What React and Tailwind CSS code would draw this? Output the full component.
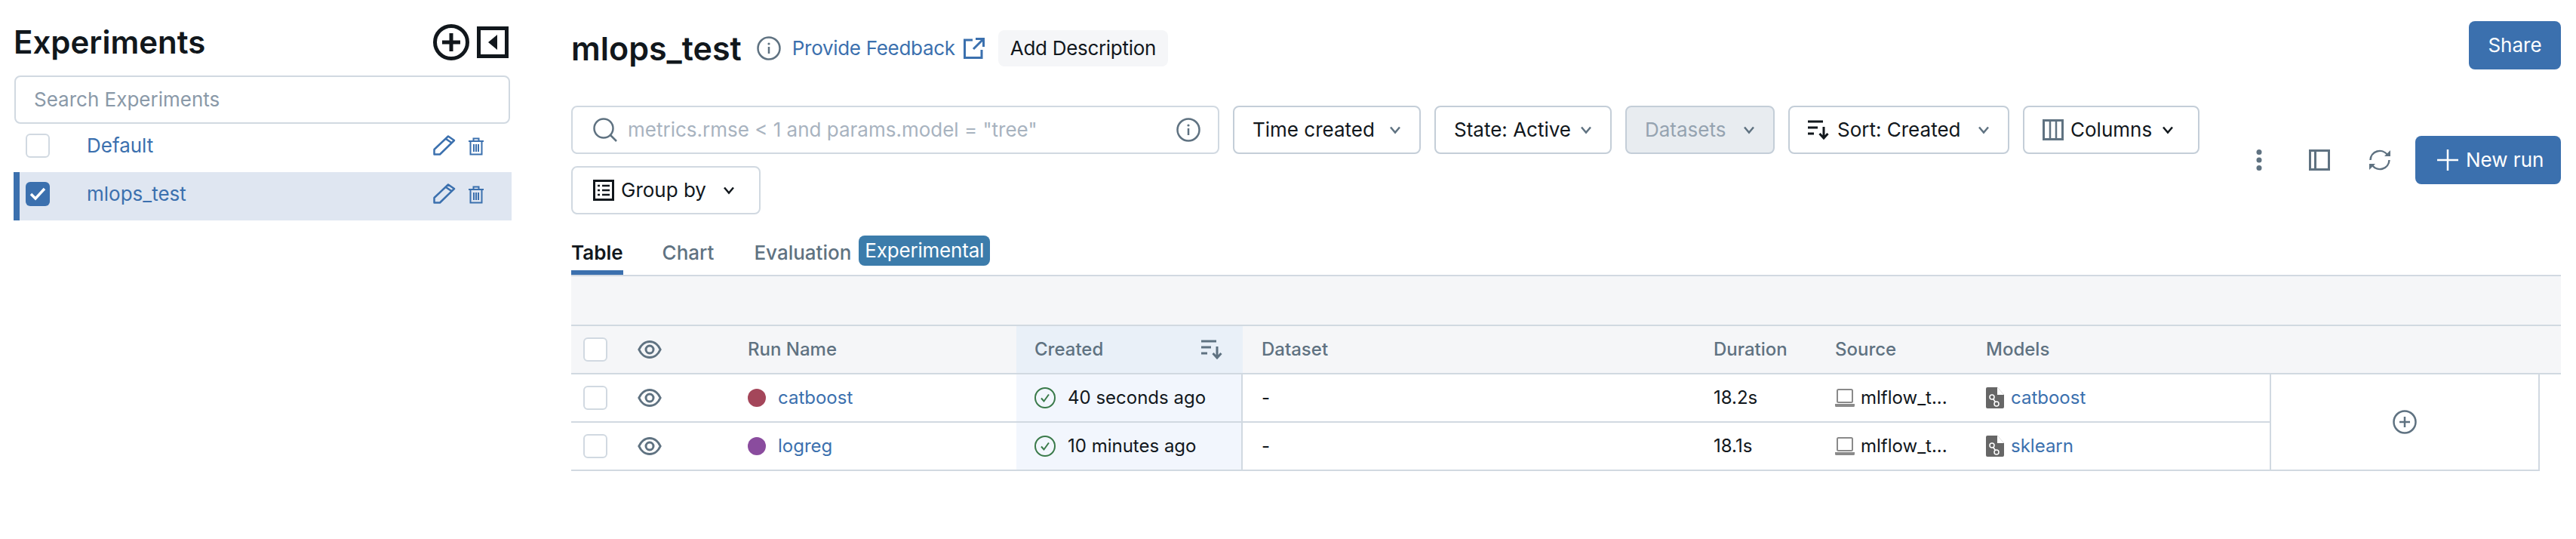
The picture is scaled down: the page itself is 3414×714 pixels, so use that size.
const FILTERS = [
  { label: "Time created", width: "w-[249px]" },
  { label: "State: Active", width: "w-[235px]" },
  { label: "Datasets", width: "w-[198px]", disabled: true },
  { label: "Sort: Created", width: "w-[293px]", icon: "sort" },
  { label: "Columns", width: "w-[234px]", icon: "columns" },
];

const RUNS = [
  { name: "catboost", color: "bg-[#a4465a]", created: "40 seconds ago", duration: "18.2s", model: "catboost" },
  { name: "logreg", color: "bg-[#8a4c9e]", created: "10 minutes ago", duration: "18.1s", model: "sklearn" },
];

function Chevron({ className = "" }) {
  return (
    <svg className={className} width="16" height="12" viewBox="0 0 16 12" fill="none" stroke="currentColor" strokeWidth="2.5">
      <path d="M2 2.5l6 7 6-7" />
    </svg>
  );
}

function InfoIcon({ size = 32 }) {
  return (
    <svg width={size} height={size} viewBox="0 0 32 32" fill="none" className="text-[#5f7281] shrink-0">
      <circle cx="16" cy="16" r="14.5" stroke="currentColor" strokeWidth="2.5" />
      <path d="M16 14v9" stroke="currentColor" strokeWidth="2.5" />
      <circle cx="16" cy="10" r="1.6" fill="currentColor" />
    </svg>
  );
}

function Pencil() {
  return (
    <svg width="30" height="28" viewBox="0 0 30 28" fill="none" stroke="currentColor" strokeWidth="2.5" strokeLinejoin="round">
      <path d="M1.5 26.5V20L20 2.5l8 5.5L9 26.5z" />
      <path d="M17 6l8 5.5" />
    </svg>
  );
}

function Trash() {
  return (
    <svg width="20" height="24" viewBox="0 0 20 24" fill="none" stroke="currentColor" strokeWidth="2">
      <path d="M0 5h20M6.5 5V1.5h7V5M2.5 5v17.5h15V5M7 9v10M10 9v10M13 9v10" />
    </svg>
  );
}

function Eye() {
  return (
    <svg width="32" height="24" viewBox="0 0 32 24" fill="none" stroke="#5f7281" strokeWidth="3" className="shrink-0">
      <path d="M16 1.5C9 1.5 4 7 1.8 12 4 17 9 22.5 16 22.5S28 17 30.2 12C28 7 23 1.5 16 1.5z" />
      <circle cx="16" cy="12" r="5" />
    </svg>
  );
}

function SortIcon({ color }) {
  return (
    <svg width="30" height="26" viewBox="0 0 30 26" fill="none" stroke={color} strokeWidth="3">
      <path d="M0 2h20M0 10h13M0 18h8M21 9v15M15.5 18l5.5 6 5.5-6" />
    </svg>
  );
}

function ColumnsIcon() {
  return (
    <svg width="28" height="28" viewBox="0 0 28 28" fill="none" stroke="#5f7281" strokeWidth="2.5">
      <rect x="1.5" y="1.5" width="25" height="25" strokeWidth="3" />
      <path d="M10 2v24M18 2v24" />
    </svg>
  );
}

function GroupIcon() {
  return (
    <svg width="28" height="28" viewBox="0 0 28 28" fill="none" stroke="#11171c" strokeWidth="2.5">
      <rect x="1.5" y="1.5" width="25" height="25" strokeWidth="3" />
      <path d="M6 8h3M12 8h10M6 14h3M12 14h10M6 20h3M12 20h10" />
    </svg>
  );
}

function CheckCircle() {
  return (
    <svg width="28" height="28" viewBox="0 0 28 28" fill="none" stroke="#3a7a4a" strokeWidth="2" className="shrink-0">
      <circle cx="14" cy="14" r="13" />
      <path d="M9 14.5l3.5 4 6.5-9" />
    </svg>
  );
}

function Laptop() {
  return (
    <svg width="26" height="26" viewBox="0 0 26 26" fill="none" className="shrink-0">
      <rect x="3" y="2" width="20" height="17" rx="1.5" stroke="#8a8a8a" strokeWidth="2" />
      <path d="M0 21h26v2.5a1.5 1.5 0 0 1-1.5 1.5h-23A1.5 1.5 0 0 1 0 23.5z" fill="#8a8a8a" />
    </svg>
  );
}

function ModelIcon() {
  return (
    <svg width="24" height="28" viewBox="0 0 24 28" className="shrink-0">
      <path d="M2 0h13l9 10v16a2 2 0 0 1-2 2H2a2 2 0 0 1-2-2V2a2 2 0 0 1 2-2z" fill="#666" />
      <path d="M15 0v10h9z" fill="#fff" />
      <path d="M8 13l6 9" stroke="#fff" strokeWidth="1.5" fill="none" />
      <circle cx="8" cy="13" r="3" fill="#666" stroke="#fff" strokeWidth="1.5" />
      <circle cx="14" cy="22" r="3" fill="#666" stroke="#fff" strokeWidth="1.5" />
    </svg>
  );
}

function Checkbox({ checked }) {
  return checked ? (
    <div className="w-[32px] h-[32px] rounded-[6px] bg-[#3b70ae] flex items-center justify-center shrink-0">
      <svg width="22" height="18" viewBox="0 0 22 18" fill="none" stroke="#fff" strokeWidth="3.5">
        <path d="M2 9l6 6L20 2" />
      </svg>
    </div>
  ) : (
    <div className="w-[32px] h-[32px] rounded-[6px] border-2 border-[#d1d9e1] bg-white shrink-0" />
  );
}

function ExperimentRow({ name, selected }) {
  return (
    <div className={`h-[64px] pb-[6px] flex items-center text-[#3b70ae] border-l-[8px] ${selected ? "bg-[#dfe6f1] border-[#3b70ae]" : "border-transparent"}`}>
      <div className="ml-[8px] w-[81px]">
        <Checkbox checked={selected} />
      </div>
      <span>{name}</span>
      <div className="ml-auto mr-[37px] pb-[2px] flex items-end gap-[17px]">
        <Pencil />
        <Trash />
      </div>
    </div>
  );
}

function Sidebar() {
  return (
    <div className="w-[660px] ml-[18px] mr-[79px] shrink-0 pt-[28px]">
      <div className="h-[56px] flex items-center">
        <h1 className="text-[42px] font-semibold text-[#11171c] leading-none">Experiments</h1>
        <div className="ml-auto mr-[4px] flex items-center gap-[10px]">
          <svg width="48" height="48" viewBox="0 0 48 48" fill="none" stroke="#11171c" strokeWidth="5">
            <circle cx="24" cy="24" r="21.5" />
            <path d="M24 12v24M12 24h24" />
          </svg>
          <svg width="42" height="42" viewBox="0 0 42 42" fill="none">
            <rect x="2.5" y="2.5" width="37" height="37" stroke="#11171c" strokeWidth="5" />
            <path d="M15 21l12-10v20z" fill="#11171c" />
          </svg>
        </div>
      </div>
      <div className="mt-[16px] h-[64px] mr-[2px] ml-[1px] rounded-[8px] border-2 border-[#d1d9e1] flex items-center px-[24px]">
        <input
          placeholder="Search Experiments"
          className="w-full outline-none bg-transparent placeholder:text-[#8a99a8]"
        />
      </div>
      <ExperimentRow name="Default" />
      <ExperimentRow name="mlops_test" selected />
    </div>
  );
}

function FilterButton({ label, width, disabled, icon }) {
  return (
    <div
      className={`${width} h-[64px] rounded-[8px] border-2 border-[#c4ced8] flex items-center pl-[24px] ${icon === "columns" ? "pr-[32px]" : "pr-[24px]"} ${
        disabled ? "bg-[#e8ecf0] text-[#95a3b0]" : "bg-white text-[#11171c]"
      }`}
    >
      {icon === "sort" && <span className="mr-[9px] flex"><SortIcon color="#11171c" /></span>}
      {icon === "columns" && <span className="mr-[9px] flex"><ColumnsIcon /></span>}
      <span>{label}</span>
      <Chevron className={`ml-auto ${disabled ? "text-[#5f7281]" : icon === "columns" ? "text-[#11171c]" : "text-[#5f7281]"}`} />
    </div>
  );
}

function HeaderCell({ children, className = "" }) {
  return (
    <div className={`h-[64px] border-b-2 border-[#d1d9e1] bg-[#f5f6f8] flex items-center font-medium text-[#5f7281] ${className}`}>
      {children}
    </div>
  );
}

function BodyCell({ children, className = "" }) {
  return <div className={`h-[64px] border-b-2 border-[#d1d9e1] flex items-center whitespace-nowrap ${className}`}>{children}</div>;
}

function RunsTable() {
  return (
    <div className="grid grid-cols-[88px_146px_356px_300px_600px_161px_200px_400px_358px_28px] grid-rows-[64px_64px_64px] text-[24px]">
      <HeaderCell className="pl-[16px]"><Checkbox /></HeaderCell>
      <HeaderCell><Eye /></HeaderCell>
      <HeaderCell>Run Name</HeaderCell>
      <HeaderCell className="!bg-[#e9f0f8] pl-[24px] pr-[25px] justify-between">
        Created
        <SortIcon color="#5f7281" />
      </HeaderCell>
      <HeaderCell className="pl-[25px]">Dataset</HeaderCell>
      <HeaderCell className="pl-[24px]">Duration</HeaderCell>
      <HeaderCell className="pl-[24px]">Source</HeaderCell>
      <HeaderCell className="pl-[24px]">Models</HeaderCell>
      <HeaderCell />
      <HeaderCell />

      {RUNS.map((run, i) => (
        <div key={run.name} className="contents">
          <BodyCell className="pl-[16px]"><Checkbox /></BodyCell>
          <BodyCell><Eye /></BodyCell>
          <BodyCell className="gap-[16px] text-[#3b70ae]">
            <span className={`w-[24px] h-[24px] rounded-full ${run.color}`} />
            {run.name}
          </BodyCell>
          <BodyCell className="bg-[#f2f6fd] border-r-2 border-r-[#d1d9e1] pl-[24px] gap-[16px]">
            <CheckCircle />
            {run.created}
          </BodyCell>
          <BodyCell className="pl-[25px]">-</BodyCell>
          <BodyCell className="pl-[24px]">{run.duration}</BodyCell>
          <BodyCell className="pl-[24px] gap-[8px]">
            <Laptop />
            mlflow_t...
          </BodyCell>
          <BodyCell className="pl-[24px] gap-[9px] text-[#3b70ae]">
            <ModelIcon />
            {run.model}
          </BodyCell>
          {i === 0 && (
            <div className="row-span-2 border-l-2 border-r-2 border-b-2 border-[#d1d9e1] flex items-center justify-center">
              <svg width="32" height="32" viewBox="0 0 32 32" fill="none" stroke="#5f7281" strokeWidth="2.5">
                <circle cx="16" cy="16" r="14.5" />
                <path d="M16 9v14M9 16h14" />
              </svg>
            </div>
          )}
          <div />
        </div>
      ))}
    </div>
  );
}

export default function App() {
  return (
    <div className="flex min-h-screen bg-white text-[26px] leading-[36px] text-[#11171c] [font-family:Inter,sans-serif]">
      <Sidebar />

      <div className="flex-1 min-w-0 pt-[28px] pr-[20px]">
        {/* title row */}
        <div className="flex items-start justify-between">
          <div className="h-[64px] flex items-center pt-[8px]">
            <h2 className="text-[43px] font-semibold leading-none">mlops_test</h2>
            <span className="ml-[20px]"><InfoIcon /></span>
            <a className="ml-[15px] text-[#3b70ae] flex items-center gap-[11px] tracking-[-0.3px]">
              Provide Feedback
              <svg width="28" height="28" viewBox="0 0 28 28" fill="none" stroke="currentColor" strokeWidth="3">
                <path d="M12 3H1.5v23.5H24V16M16 1.5h10.5V12M26 2L13 15" />
              </svg>
            </a>
            <div className="ml-[18px] h-[48px] px-[16px] rounded-[8px] bg-[#f5f6f8] flex items-center tracking-[-0.3px]">Add Description</div>
          </div>
          <div className="w-[122px] h-[64px] rounded-[8px] bg-[#3b70ae] text-white flex items-center justify-center">Share</div>
        </div>

        {/* toolbar */}
        <div className="mt-[48px] flex items-start justify-between">
          <div className="w-[2158px] flex flex-wrap gap-x-[18px] gap-y-[16px]">
            <div className="w-[859px] h-[64px] rounded-[8px] border-2 border-[#d1d9e1] flex items-center pl-[27px] pr-[23px]">
              <svg width="32" height="32" viewBox="0 0 32 32" fill="none" stroke="#5f7281" strokeWidth="2.5" className="shrink-0">
                <circle cx="14" cy="14" r="12.5" />
                <path d="M23 23l8 8" />
              </svg>
              <input
                placeholder='metrics.rmse < 1 and params.model = "tree"'
                className="ml-[14px] flex-1 min-w-0 outline-none bg-transparent placeholder:text-[#a8b3bf]"
              />
              <InfoIcon />
            </div>
            {FILTERS.map((f) => (
              <FilterButton key={f.label} {...f} />
            ))}
            <div className="w-[251px] h-[64px] rounded-[8px] border-2 border-[#d1d9e1] flex items-center pl-[27px] pr-[32px]">
              <span className="mr-[9px] flex"><GroupIcon /></span>
              Group by
              <Chevron className="ml-auto text-[#11171c]" />
            </div>
          </div>

          <div className="mt-[40px] flex items-center">
            <svg width="8" height="28" viewBox="0 0 8 28" fill="#5f7281">
              <circle cx="4" cy="3.5" r="3.5" />
              <circle cx="4" cy="14" r="3.5" />
              <circle cx="4" cy="24.5" r="3.5" />
            </svg>
            <svg className="ml-[62px]" width="28" height="28" viewBox="0 0 28 28" fill="none" stroke="#5f7281" strokeWidth="3">
              <rect x="1.5" y="1.5" width="25" height="25" />
              <path d="M8.5 2v24" />
            </svg>
            <svg className="ml-[52px]" width="28" height="28" viewBox="0 0 28 28" fill="none" stroke="#5f7281" strokeWidth="2.5">
              <path d="M1.5 14A12.5 12.5 0 0 1 24 7M26.5 14A12.5 12.5 0 0 1 4 21" />
              <path d="M28 1v8h-8zM0 27v-8h8z" fill="#5f7281" stroke="none" />
            </svg>
            <div className="ml-[33px] w-[193px] h-[64px] rounded-[8px] bg-[#3b70ae] text-white flex items-center pl-[29px] gap-[10px]">
              <svg width="28" height="28" viewBox="0 0 28 28" fill="none" stroke="#fff" strokeWidth="2.5" className="shrink-0">
                <path d="M14 0v28M0 14h28" />
              </svg>
              New run
            </div>
          </div>
        </div>

        {/* tabs */}
        <div className="mt-[28px] h-[54px] border-b-2 border-[#d1d9e1] flex items-start">
          <div className="h-[52px] border-b-[6px] border-[#3b70ae] font-semibold flex items-center">Table</div>
          <div className="ml-[52px] h-[46px] flex items-center font-medium text-[#5f7281]">Chart</div>
          <div className="ml-[53px] h-[46px] flex items-center font-medium text-[#5f7281]">Evaluation</div>
          <div className="ml-[10px] h-[40px] px-[8px] rounded-[8px] bg-[#3c7cab] text-white flex items-center tracking-[-0.2px]">Experimental</div>
        </div>

        {/* empty band above the table header */}
        <div className="h-[66px] bg-[#f5f6f8] border-b-2 border-[#d1d9e1]" />
        <RunsTable />
      </div>
    </div>
  );
}
